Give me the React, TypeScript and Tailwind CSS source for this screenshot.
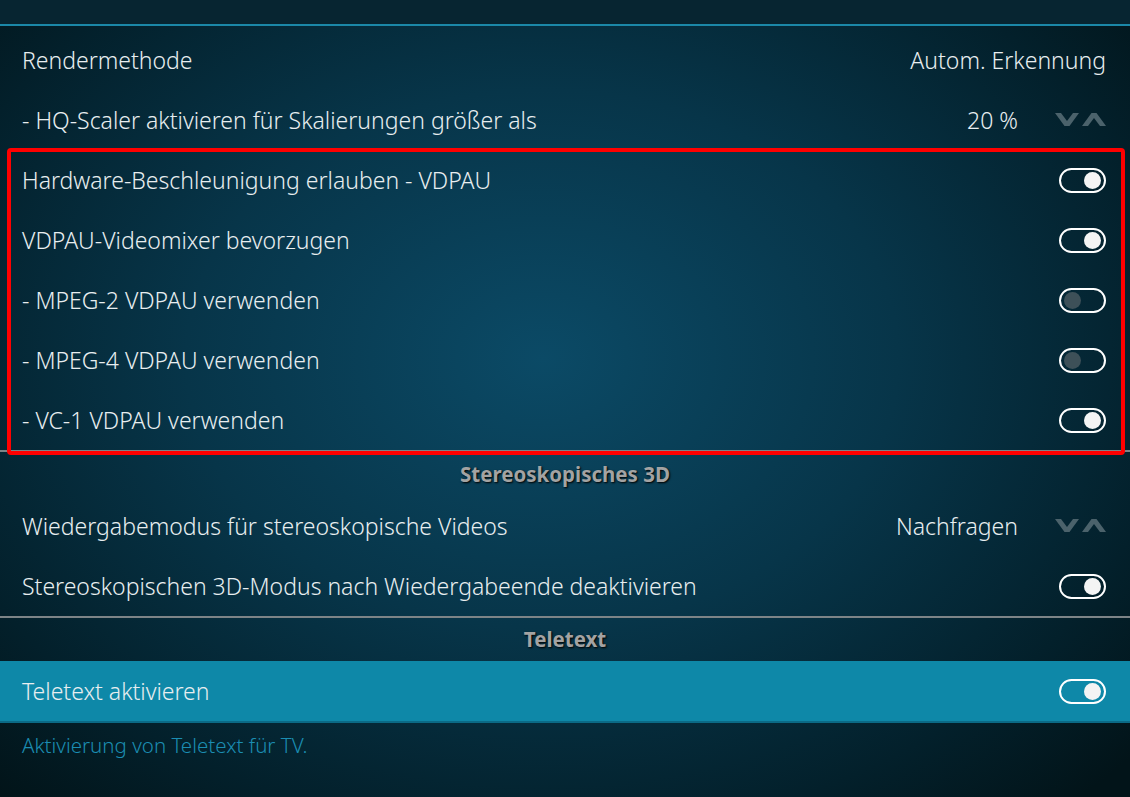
import React from 'react';

type Row =
	| { label: string; kind: 'value'; value: string }
	| { label: string; kind: 'spin'; value: string }
	| { label: string; kind: 'toggle'; on: boolean };

const Toggle = ({ on }: { on: boolean }) => (
	<div
		className={`w-[47px] h-[25px] rounded-full border-2 border-white flex items-center px-[3px] ${
			on ? 'justify-end' : 'justify-start'
		}`}
	>
		<div
			className={`size-[17px] rounded-full ${on ? 'bg-[#f4f4f4]' : 'bg-[#3d5058]'}`}
		/>
	</div>
);

const Spinner = () => (
	<svg width="51" height="14" viewBox="0 0 51 14" className="shrink-0">
		<polygon points="0,0 6,0 12,8 18,0 24,0 14.5,13 9.5,13" fill="#4b626b" />
		<polygon points="27,13 33,13 39,5 45,13 51,13 41.5,0 36.5,0" fill="#4b626b" />
	</svg>
);

const SettingRow = ({ row }: { row: Row }) => (
	<div className="h-[60px] flex items-center justify-between pl-[22px] pr-[24px]">
		<span>{row.label}</span>
		{row.kind === 'value' && <span>{row.value}</span>}
		{row.kind === 'spin' && (
			<div className="flex items-center">
				<span className="mr-[37px]">{row.value}</span>
				<Spinner />
			</div>
		)}
		{row.kind === 'toggle' && <Toggle on={row.on} />}
	</div>
);

const Header = ({ title, h }: { title: string; h: string }) => (
	<div
		className={`${h} flex items-center justify-center text-[20.5px] font-bold text-[#a3a3a3] [text-shadow:1px_1px_2px_#000]`}
	>
		{title}
	</div>
);

const videoRows: Row[] = [
	{ label: 'Rendermethode', kind: 'value', value: 'Autom. Erkennung' },
	{ label: '- HQ-Scaler aktivieren für Skalierungen größer als', kind: 'spin', value: '20 %' },
	{ label: 'Hardware-Beschleunigung erlauben - VDPAU', kind: 'toggle', on: true },
	{ label: 'VDPAU-Videomixer bevorzugen', kind: 'toggle', on: true },
	{ label: '- MPEG-2 VDPAU verwenden', kind: 'toggle', on: false },
	{ label: '- MPEG-4 VDPAU verwenden', kind: 'toggle', on: false },
	{ label: '- VC-1 VDPAU verwenden', kind: 'toggle', on: true },
];

const stereoRows: Row[] = [
	{ label: 'Wiedergabemodus für stereoskopische Videos', kind: 'spin', value: 'Nachfragen' },
	{
		label: 'Stereoskopischen 3D-Modus nach Wiedergabeende deaktivieren',
		kind: 'toggle',
		on: true,
	},
];

export default function App() {
	return (
		<div
			className="relative w-[1130px] h-[797px] overflow-hidden text-[23px] font-light text-[#e8eef0] bg-[radial-gradient(ellipse_70%_75%_at_48%_45%,#0b4a66_0%,#073549_45%,#03202b_80%,#021419_100%)]"
			style={{ fontFamily: '"Noto Sans", "Open Sans", sans-serif' }}
		>
			<div className="h-[24px] bg-[#072531]" />
			<div className="h-[2px] bg-[#1b88a8]" />
			<div className="h-[4px]" />

			{videoRows.map(row => (
				<SettingRow key={row.label} row={row} />
			))}
			<div className="h-[2px] bg-[#7d8487]" />

			<Header title="Stereoskopisches 3D" h="h-[44px]" />
			{stereoRows.map(row => (
				<SettingRow key={row.label} row={row} />
			))}
			<div className="h-[2px] bg-[#7d8487]" />

			<Header title="Teletext" h="h-[43px]" />
			<div className="bg-[#0e88a8]">
				<SettingRow row={{ label: 'Teletext aktivieren', kind: 'toggle', on: true }} />
			</div>
			<div className="h-[2px] bg-[#0b6a86]" />
			<div className="h-[45px] flex items-center pl-[22px] text-[20.5px] text-[#1b8db2]">
				Aktivierung von Teletext für TV.
			</div>

			<div className="absolute left-[7px] top-[148px] w-[1118px] h-[307px] border-4 border-[#ff0000] rounded-[4px] pointer-events-none" />
		</div>
	);
}
